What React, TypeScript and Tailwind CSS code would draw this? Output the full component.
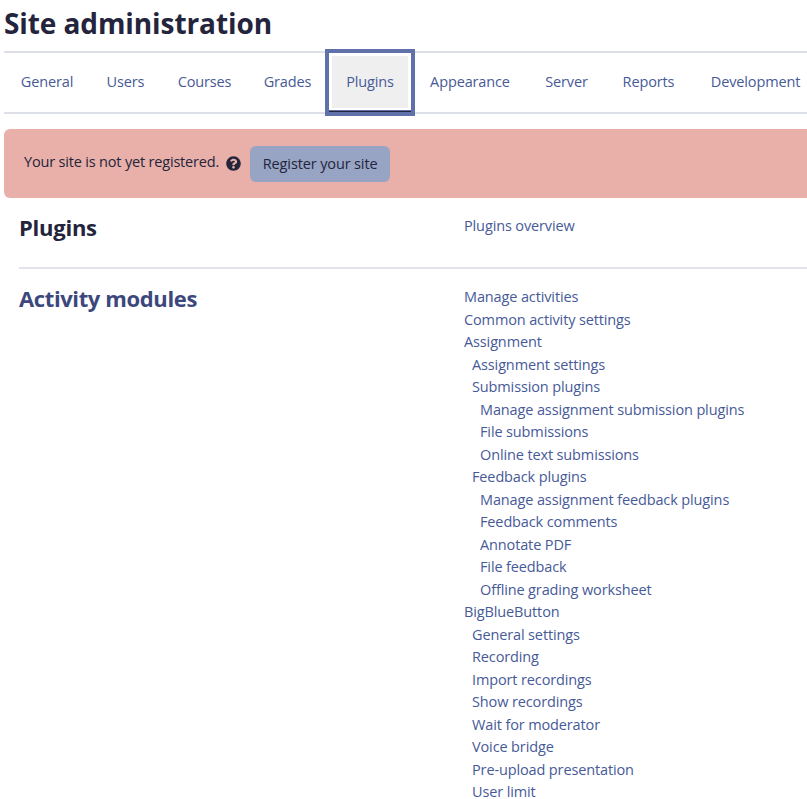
import React from "react";

type Tab = { label: string; width: string; active?: boolean };
type Link = { label: string; level: 0 | 1 | 2 };

const tabs: Tab[] = [
  { label: "General", width: "w-[86px]" },
  { label: "Users", width: "w-[71px]" },
  { label: "Courses", width: "w-[87px]" },
  { label: "Grades", width: "w-[79px]" },
  { label: "Plugins", width: "w-[90px]", active: true },
  { label: "Appearance", width: "w-[110px]" },
  { label: "Server", width: "w-[83px]" },
  { label: "Reports", width: "w-[81px]" },
  { label: "Development", width: "w-[133px]" },
];

const links: Link[] = [
  { label: "Manage activities", level: 0 },
  { label: "Common activity settings", level: 0 },
  { label: "Assignment", level: 0 },
  { label: "Assignment settings", level: 1 },
  { label: "Submission plugins", level: 1 },
  { label: "Manage assignment submission plugins", level: 2 },
  { label: "File submissions", level: 2 },
  { label: "Online text submissions", level: 2 },
  { label: "Feedback plugins", level: 1 },
  { label: "Manage assignment feedback plugins", level: 2 },
  { label: "Feedback comments", level: 2 },
  { label: "Annotate PDF", level: 2 },
  { label: "File feedback", level: 2 },
  { label: "Offline grading worksheet", level: 2 },
  { label: "BigBlueButton", level: 0 },
  { label: "General settings", level: 1 },
  { label: "Recording", level: 1 },
  { label: "Import recordings", level: 1 },
  { label: "Show recordings", level: 1 },
  { label: "Wait for moderator", level: 1 },
  { label: "Voice bridge", level: 1 },
  { label: "Pre-upload presentation", level: 1 },
  { label: "User limit", level: 1 },
];

const indent = { 0: "", 1: "pl-2", 2: "pl-4" };

function HelpIcon() {
  return (
    <svg viewBox="0 0 512 512" className="ml-[7px] size-[15px] shrink-0" fill="#24243c">
      <path d="M504 256c0 137-111 248-248 248S8 393 8 256 119 8 256 8s248 111 248 248zM262.700 90c-54.500 0-89.300 23-116.500 63.800-3.500 5.300-2.400 12.400 2.700 16.300l34.700 26.300c5.200 3.900 12.600 3 16.700-2.100 17.900-22.700 30.100-35.800 57.300-35.800 20.400 0 45.700 13.100 45.700 33 0 15-12.400 22.700-32.500 34C247.100 238.500 216 254.900 216 296v4c0 6.600 5.400 12 12 12h56c6.600 0 12-5.400 12-12v-1.300c0-28.500 83.200-29.600 83.200-106.700 0-58-60.200-102-116.500-102zM256 338c-25.400 0-46 20.600-46 46s20.600 46 46 46 46-20.600 46-46-20.600-46-46-46z" />
    </svg>
  );
}

export default function App() {
  return (
    <div className="h-[799px] w-full overflow-hidden bg-white pl-1 font-['Open_Sans',sans-serif] text-[14.5px] tracking-[-0.13px] text-[#475a98]">
      <h1 className="h-[51px] whitespace-nowrap pt-1 text-[28px] font-bold leading-[38px] tracking-[-0.09px] text-[#24243c]">
        Site administration
      </h1>
      <nav className="flex h-[63px] w-[818px] border-y-2 border-[#dde0e8]">
        {tabs.map((tab) => (
          <a
            key={tab.label}
            className={`flex shrink-0 items-center justify-center ${tab.width} ${
              tab.active
                ? "-ml-[2px] -mt-[4px] h-[67px] border-4 border-[#6070a8] bg-[#efefef] pb-px shadow-[inset_0_-1px_0_#24243c,inset_0_-2px_0_#6070a8,inset_0_0_0_3px_#fff,inset_0_-4px_0_#fff]"
                : "pb-px"
            }`}
          >
            {tab.label}
          </a>
        ))}
      </nav>
      <div className="mt-[15px] flex h-[69px] items-center rounded-l-md bg-[#e8b0a8] pl-5 text-[#24243c]">
        <span className="-mt-1 whitespace-nowrap tracking-[-0.18px]">Your site is not yet registered.</span>
        <HelpIcon />
        <button className="ml-[9px] h-9 w-[140px] whitespace-nowrap rounded-md bg-[#98a4c4]">
          Register your site
        </button>
      </div>
      <section className="ml-[15px] flex h-[71px] border-b-2 border-[#e2e4ea] pt-[17px]">
        <h2 className="-mt-0.5 w-[445px] text-[22px] font-bold leading-7 tracking-[-0.25px] text-[#24243c]">Plugins</h2>
        <a className="leading-[22.5px]">Plugins overview</a>
      </section>
      <section className="ml-[15px] flex pt-[17px]">
        <h2 className="-mt-0.5 w-[445px] text-[22px] font-bold leading-7 tracking-[-0.38px] text-[#3c487c]">Activity modules</h2>
        <ul>
          {links.map((link) => (
            <li key={link.label} className={`h-[22.5px] whitespace-nowrap leading-[22.5px] ${indent[link.level]}`}>
              {link.label}
            </li>
          ))}
        </ul>
      </section>
    </div>
  );
}
